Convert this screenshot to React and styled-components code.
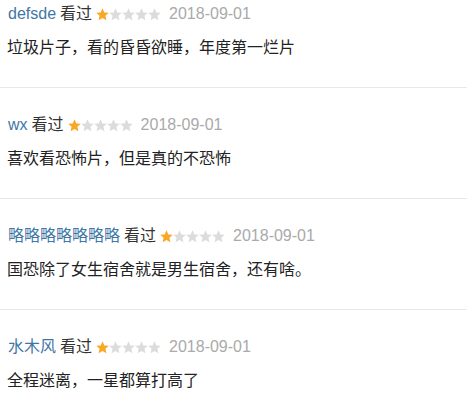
import React from "react";
import styled, { createGlobalStyle } from "styled-components";

const Global = createGlobalStyle`
  html, body { margin: 0; padding: 0; background: #fff; }
  body { font-family: "Liberation Sans", Arial, "Noto Sans CJK SC", sans-serif; }
`;

const List = styled.div`
  width: 467px;
  display: flex;
  flex-direction: column;
`;

const Item = styled.div`
  padding: ${(p) => (p.$first ? "2px" : "25px")} 0 29px 7px;
  border-bottom: 1px solid #e8e8e8;
`;

const Meta = styled.div`
  display: flex;
  align-items: center;
  height: 24px;
  font-size: 16px;
  line-height: 24px;
  white-space: nowrap;
`;

const Name = styled.span`
  color: #3f76a6;
  margin-left: 1px;
`;

const Watched = styled.span`
  color: #333;
  margin-left: 4px;
`;

const Stars = styled.span`
  display: inline-flex;
  margin-left: 4px;
`;

const Date = styled.span`
  color: #aaa;
  margin-left: 8px;
`;

const Comment = styled.p`
  margin: 8px 0 0;
  font-size: 16px;
  line-height: 24px;
  color: #222;
  font-family: "Noto Sans CJK SC", sans-serif;
`;

const Star = ({ on }) => (
  <svg width="13" height="13" viewBox="0 0 24 24">
    <path
      d="M12 0.5l3.4 7.6 8.2.8-6.2 5.5 1.8 8.1L12 18.3l-7.2 4.2 1.8-8.1L0.4 8.9l8.2-.8z"
      fill={on ? "#f9a825" : "#dcdcdc"}
    />
  </svg>
);

const data = [
  { name: "defsde", text: "垃圾片子，看的昏昏欲睡，年度第一烂片" },
  { name: "wx", text: "喜欢看恐怖片，但是真的不恐怖" },
  { name: "略略略略略略略", text: "国恐除了女生宿舍就是男生宿舍，还有啥。" },
  { name: "水木风", text: "全程迷离，一星都算打高了" },
];

export default function App() {
  return (
    <>
      <Global />
      <List>
        {data.map((d, i) => (
          <Item key={i} $first={i === 0}>
            <Meta>
              <Name>{d.name}</Name>
              <Watched>看过</Watched>
              <Stars>
                {[0, 1, 2, 3, 4].map((s) => (
                  <Star key={s} on={s === 0} />
                ))}
              </Stars>
              <Date>2018-09-01</Date>
            </Meta>
            <Comment>{d.text}</Comment>
          </Item>
        ))}
      </List>
    </>
  );
}
